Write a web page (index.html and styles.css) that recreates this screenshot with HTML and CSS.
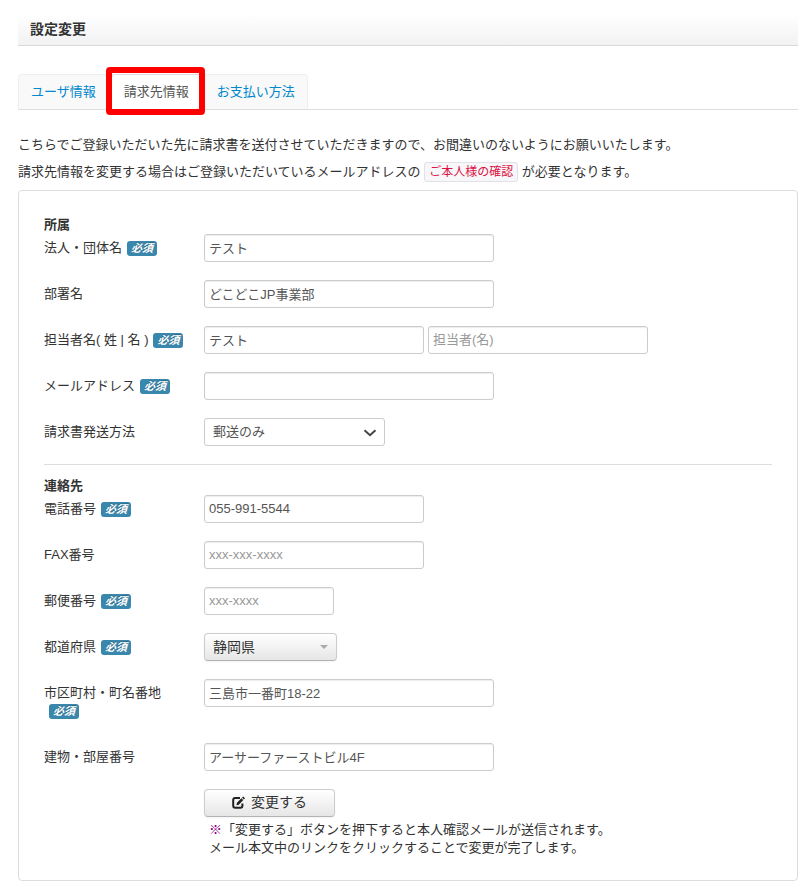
FILE: index.html
```html
<!DOCTYPE html>
<html lang="ja">
<head>
<meta charset="utf-8">
<meta name="viewport" content="width=device-width, initial-scale=1">
<title>設定変更</title>
<link rel="stylesheet" href="styles.css">
</head>
<body>
<header class="page-head"><h1>設定変更</h1></header>
<nav class="tabs">
  <a class="tab" href="#user">ユーザ情報</a>
  <a class="tab active" href="#billing" aria-current="page">請求先情報</a>
  <a class="tab" href="#payment">お支払い方法</a>
</nav>
<main>
  <div class="intro">
    <p>こちらでご登録いただいた先に請求書を送付させていただきますので、お間違いのないようにお願いいたします。</p>
    <p>請求先情報を変更する場合はご登録いただいているメールアドレスの <code>ご本人様の確認</code> が必要となります。</p>
  </div>
  <form class="panel">
    <section>
      <h2>所属</h2>
      <div class="row">
        <label for="company">法人・団体名<em class="badge">必須</em></label>
        <div class="controls"><input class="wide" id="company" type="text" value="テスト"></div>
      </div>
      <div class="row">
        <label for="dept">部署名</label>
        <div class="controls"><input class="wide" id="dept" type="text" value="どこどこJP事業部"></div>
      </div>
      <div class="row">
        <label for="last">担当者名( 姓 | 名 )<em class="badge">必須</em></label>
        <div class="controls"><input class="medium" id="last" type="text" value="テスト"><input class="medium" type="text" aria-label="担当者(名)" placeholder="担当者(名)"></div>
      </div>
      <div class="row">
        <label for="mail">メールアドレス<em class="badge">必須</em></label>
        <div class="controls"><input class="wide" id="mail" type="email"></div>
      </div>
      <div class="row">
        <label for="send">請求書発送方法</label>
        <div class="controls">
          <div class="picker">
            <select id="send" class="send"><option>郵送のみ</option></select>
            <svg class="chevron" width="14" height="8" viewBox="0 0 14 8" aria-hidden="true"><path d="M1.5 1.2 7 6.2 12.5 1.2" fill="none" stroke="#444" stroke-width="2"/></svg>
          </div>
        </div>
      </div>
    </section>
    <section class="contact">
      <h2>連絡先</h2>
      <div class="row">
        <label for="tel">電話番号<em class="badge">必須</em></label>
        <div class="controls"><input class="medium" id="tel" type="tel" value="055-991-5544"></div>
      </div>
      <div class="row">
        <label for="fax">FAX番号</label>
        <div class="controls"><input class="medium" id="fax" type="tel" placeholder="xxx-xxx-xxxx"></div>
      </div>
      <div class="row">
        <label for="zip">郵便番号<em class="badge">必須</em></label>
        <div class="controls"><input class="small" id="zip" type="text" placeholder="xxx-xxxx"></div>
      </div>
      <div class="row">
        <label for="pref">都道府県<em class="badge">必須</em></label>
        <div class="controls">
          <div class="picker">
            <select id="pref" class="pref raised"><option>静岡県</option></select>
            <svg class="caret" width="8" height="4" viewBox="0 0 8 4" aria-hidden="true"><path d="M0 0H8L4 4Z" fill="#aaa"/></svg>
          </div>
        </div>
      </div>
      <div class="row">
        <label for="city">市区町村・町名番地 <em class="badge">必須</em></label>
        <div class="controls"><input class="wide" id="city" type="text" value="三島市一番町18-22"></div>
      </div>
      <div class="row">
        <label for="bldg">建物・部屋番号</label>
        <div class="controls"><input class="wide" id="bldg" type="text" value="アーサーファーストビル4F"></div>
      </div>
      <div class="submit">
        <button class="raised" type="button">
          <svg width="13" height="13" viewBox="0 0 13 13" aria-hidden="true"><path d="M8 2H3.2Q1.2 2 1.2 4V9.8Q1.2 11.8 3.2 11.8H8.4Q10.4 11.8 10.4 9.8V7.6" fill="none" stroke="#222" stroke-width="2"/><path d="M4.4 9.2 4.9 6.8 9.4 2.2 11.3 4.1 6.8 8.7ZM10 1.6 11.2.4 13 2.3 11.9 3.5Z" fill="#222"/></svg>
          <span>変更する</span>
        </button>
        <p class="note"><span class="mark">※</span>「変更する」ボタンを押下すると本人確認メールが送信されます。<br>メール本文中のリンクをクリックすることで変更が完了します。</p>
      </div>
    </section>
  </form>
</main>
</body>
</html>
```

FILE: styles.css
```css
* { box-sizing: border-box; }

body {
  margin: 0;
  padding: 14px 12px 7px 18px;
  background: #fff;
  color: #333;
  font: 13px/18px "Liberation Sans", "Noto Sans CJK JP", sans-serif;
}

h1, h2, p { margin: 0; }

input, select, button { font: inherit; }

.page-head {
  height: 32px;
  padding: 0 12px;
  border-bottom: 1px solid #d9d9d9;
  background: linear-gradient(#fff, #f2f2f2);
}

.page-head h1 {
  font-size: 14px;
  line-height: 31px;
}

.tabs {
  display: flex;
  gap: 2px;
  margin-top: 28px;
  border-bottom: 1px solid #ddd;
}

.tab {
  position: relative;
  height: 36px;
  margin-bottom: -1px;
  padding: 0 12px;
  border: 1px solid #eee;
  border-bottom-color: #ddd;
  border-radius: 4px 4px 0 0;
  background: #f9f9f9;
  color: #08c;
  line-height: 34px;
  text-decoration: none;
}

.tab.active {
  z-index: 1;
  border-color: #ddd;
  border-bottom-color: #fff;
  background: #fff;
  color: #555;
}

/* Highlight frame drawn over the current tab */
.tab.active::after {
  content: "";
  position: absolute;
  inset: -8px -4px -6px -6px;
  border: 6px solid #f00;
  border-radius: 4px;
}

.intro {
  margin: 21px 0 5px;
  line-height: 27px;
}

code {
  padding: 2px 4px;
  border: 1px solid #e1e1e8;
  border-radius: 3px;
  background: #f7f7f9;
  color: #d14;
  font: 12px "Liberation Sans", "Noto Sans CJK JP", sans-serif;
}

.panel {
  padding: 25px 25px 23px;
  border: 1px solid #ddd;
  border-radius: 4px;
}

h2 {
  font-size: 13px;
  line-height: 18px;
}

.row {
  display: flex;
  gap: 20px;
  margin-bottom: 18px;
}

.row > label {
  width: 140px;
  padding: 5px 0;
}

.badge {
  display: inline-block;
  margin-left: 5px;
  padding: 0 4px;
  border-radius: 3px;
  background: #3a87ad;
  color: #fff;
  font-size: 11px;
  font-weight: bold;
  line-height: 15px;
  text-shadow: 0 -1px 0 rgba(0, 0, 0, .25);
}

.controls {
  display: flex;
  flex: 1;
  align-items: flex-start;
  gap: 4px;
}

input {
  height: 28px;
  padding: 3px 4px 5px;
  border: 1px solid #ccc;
  border-radius: 3px;
  background: #fff;
  box-shadow: inset 0 1px 1px rgba(0, 0, 0, .075);
  color: #555;
}

input::placeholder { color: #999; }

.wide { width: 290px; }
.medium { width: 220px; }
.small { width: 130px; }

.picker { position: relative; }

select {
  appearance: none;
  display: block;
  height: 28px;
  padding: 0 8px;
  border: 1px solid #ccc;
  border-radius: 3px;
  background: #fff;
  color: #555;
}

.send { width: 181px; }

.chevron, .caret {
  position: absolute;
  pointer-events: none;
}

.chevron { right: 8px; top: 11px; }
.caret { right: 9px; top: 12px; }

.raised {
  height: 28px;
  border: 1px solid #ccc;
  border-bottom-color: #b3b3b3;
  border-radius: 4px;
  background: linear-gradient(#fff, #e6e6e6);
  box-shadow: inset 0 1px 0 rgba(255, 255, 255, .2), 0 1px 2px rgba(0, 0, 0, .05);
  color: #333;
  font-size: 14px;
}

.pref { width: 133px; }

.contact {
  padding-top: 12px;
  border-top: 1px solid #ddd;
}

.submit { margin-left: 160px; }

button {
  display: flex;
  align-items: center;
  justify-content: center;
  gap: 6px;
  width: 131px;
  padding: 0 0 2px;
}

.note { padding: 4px 5px 0; }

.mark { color: #808; }
```
